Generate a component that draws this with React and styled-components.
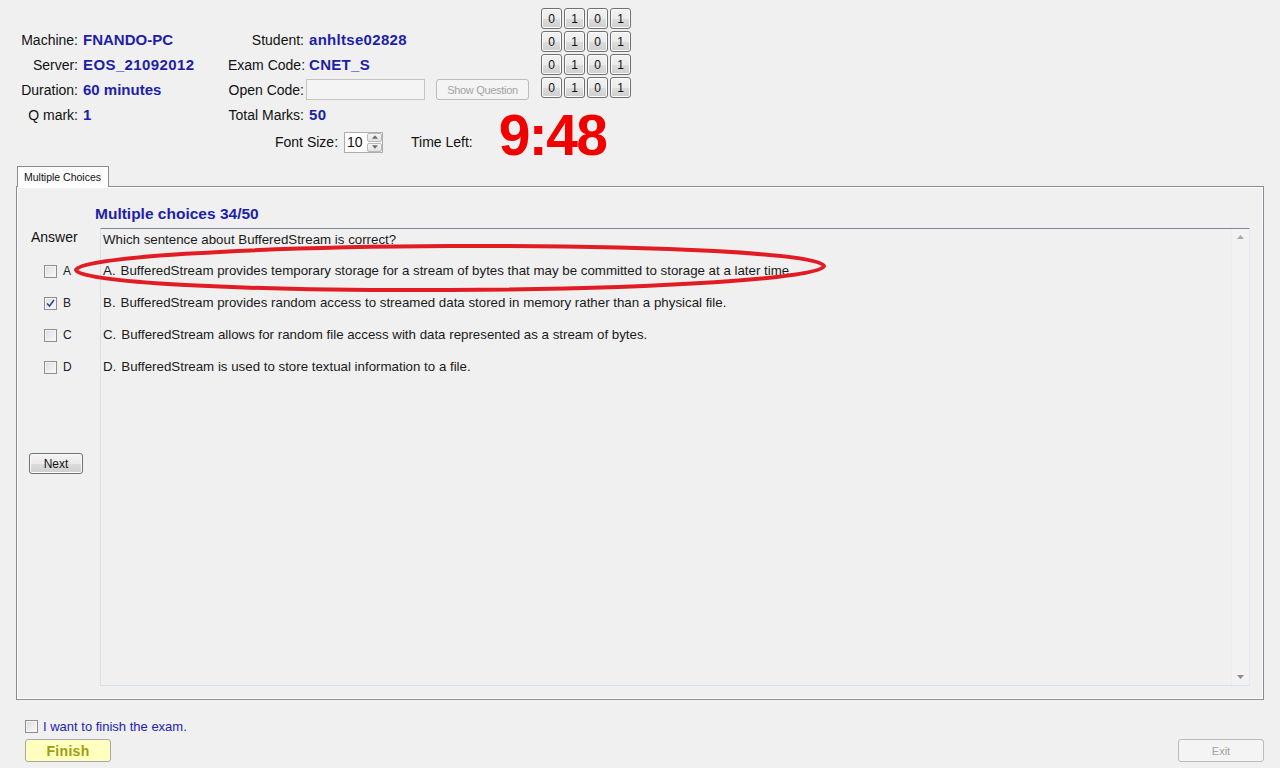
import styled, { createGlobalStyle } from "styled-components";

const GlobalStyle = createGlobalStyle`
  html, body {
    margin: 0;
    padding: 0;
    background: #f0f0f0;
  }
  body {
    font-family: "Liberation Sans", Arial, sans-serif;
    color: #111;
  }
`;

const info = [
  { label: "Machine:", value: "FNANDO-PC", label2: "Student:", value2: "anhltse02828" },
  { label: "Server:", value: "EOS_21092012", label2: "Exam Code:", value2: "CNET_S" },
  { label: "Duration:", value: "60 minutes", label2: "Open Code:", input: true },
  { label: "Q mark:", value: "1", label2: "Total Marks:", value2: "50" },
];

const options = [
  { key: "A", text: "BufferedStream provides temporary storage for a stream of bytes that may be committed to storage at a later time." },
  { key: "B", text: "BufferedStream provides random access to streamed data stored in memory rather than a physical file.", checked: true },
  { key: "C", text: "BufferedStream allows for random file access with data represented as a stream of bytes." },
  { key: "D", text: "BufferedStream is used to store textual information to a file." },
];

const bits = ["0", "1", "0", "1"];

const Page = styled.div`
  width: 1280px;
  height: 768px;
  overflow: hidden;
  display: flex;
  flex-direction: column;
`;

const Header = styled.div`
  display: grid;
  grid-template-columns: 529px auto;
  grid-template-rows: auto 28px;
  padding-top: 8px;
`;

const InfoGrid = styled.div`
  margin-top: 19px;
  margin-bottom: 1px;
  display: grid;
  grid-template-columns: 83px 145px 81px 1fr;
  grid-auto-rows: 25px;
  align-items: center;
`;

const Label = styled.div`
  text-align: right;
  padding-right: 5px;
  font-size: 14px;
  color: #111;
  white-space: nowrap;
`;

const Value = styled.div`
  font-size: 15px;
  font-weight: bold;
  color: #1e1eaa;
  white-space: nowrap;
  letter-spacing: ${(p) => p.$ls || 0}px;
`;

const CodeCell = styled.div`
  display: flex;
  align-items: center;
  gap: 11px;
`;

const CodeInput = styled.div`
  margin-left: -3px;
  width: 119px;
  height: 21px;
  box-sizing: border-box;
  border: 1px solid #c4c4c4;
  background: #f4f4f4;
`;

const WinButton = styled.button`
  box-sizing: border-box;
  width: ${(p) => p.$w}px;
  height: ${(p) => p.$h || 21}px;
  padding: 0;
  border: 1px solid ${(p) => (p.disabled ? "#b8bcbf" : "#707070")};
  border-radius: 3px;
  background: ${(p) =>
    p.disabled ? "#f4f4f4" : "linear-gradient(#f2f2f2 0%, #ebebeb 50%, #dddddd 51%, #cfcfcf 100%)"};
  color: ${(p) => (p.disabled ? "#a3a3a3" : "#111")};
  font-family: "Liberation Sans", Arial, sans-serif;
  font-size: ${(p) => p.$fs || 12}px;
  letter-spacing: ${(p) => p.$ls || 0}px;
  box-shadow: inset 0 0 0 1px ${(p) => (p.disabled ? "transparent" : "#fbfbfb")};
`;

const BitGrid = styled.div`
  margin-left: 12px;
  display: grid;
  grid-template-columns: repeat(4, 21px);
  grid-auto-rows: 21px;
  gap: 2px;
  align-self: start;
`;

const FontRow = styled.div`
  grid-column: 1 / span 2;
  display: flex;
  align-items: center;
  height: 28px;
  padding-left: 275px;
  font-size: 14px;
`;

const Spin = styled.div`
  margin-left: 6px;
  width: 39px;
  height: 21px;
  box-sizing: border-box;
  border: 1px solid #abadb3;
  background: #fff;
  display: flex;
  align-items: center;
  justify-content: space-between;
  padding-left: 2px;
  font-size: 14px;
`;

const SpinButtons = styled.div`
  width: 15px;
  height: 19px;
  display: flex;
  flex-direction: column;
  gap: 1px;
`;

const SpinArrow = styled.div`
  flex: 1;
  border: 1px solid #b9b9b9;
  border-radius: 2px;
  background: linear-gradient(#f6f6f6, #e1e1e1);
  display: flex;
  align-items: center;
  justify-content: center;
`;

const TimeLabel = styled.span`
  margin-left: 28px;
`;

const Timer = styled.div`
  margin-left: 26px;
  font-size: 57px;
  line-height: 57px;
  font-weight: bold;
  letter-spacing: -1.6px;
  color: #f20000;
  padding-bottom: 13px;
`;

const TabStrip = styled.div`
  margin: 10px 16px 0 17px;
  display: flex;
`;

const Tab = styled.div`
  height: 21px;
  box-sizing: border-box;
  padding: 0 7px 0 6px;
  border: 1px solid #898c95;
  border-bottom: none;
  background: #fcfcfc;
  font-size: 10.5px;
  line-height: 20px;
  color: #111;
  margin-bottom: -1px;
  position: relative;
  z-index: 1;
`;

const Panel = styled.div`
  position: relative;
  margin: 0 16px;
  height: 514px;
  box-sizing: border-box;
  border: 1px solid #898c95;
  box-shadow: inset 0 0 0 1px #ffffff;
  padding: 17px 13px 13px 0;
  display: flex;
  flex-direction: column;
`;

const Title = styled.div`
  height: 24px;
  padding-left: 78px;
  font-size: 15.5px;
  font-weight: bold;
  line-height: 19px;
  color: #1e1eaa;
`;

const PanelBody = styled.div`
  flex: 1;
  display: flex;
`;

const AnswerColumn = styled.div`
  width: 83px;
  display: flex;
  flex-direction: column;
`;

const AnswerLabel = styled.div`
  padding: 1px 0 0 14px;
  font-size: 14px;
  line-height: 17px;
`;

const ChoiceList = styled.div`
  margin-top: 9px;
`;

const ChoiceRow = styled.label`
  height: 32px;
  display: flex;
  align-items: center;
  gap: 6px;
  padding-left: 27px;
  font-size: 12px;
  color: #222;
`;

const Box = styled.span`
  width: 13px;
  height: 13px;
  box-sizing: border-box;
  border: 1px solid #8f8f8f;
  background: linear-gradient(135deg, #dcdcdc, #fbfbfb);
  box-shadow: inset 0 0 0 1px #f4f4f4;
  display: inline-flex;
  align-items: center;
  justify-content: center;
  flex-shrink: 0;
`;

const NextWrap = styled.div`
  margin-top: 70px;
  padding-left: 12px;
`;

const TextArea = styled.div`
  flex: 1;
  display: flex;
  border-top: 1px solid #7a8c9c;
  border-left: 1px solid #d6e0e9;
  border-right: 1px solid #e3e9ef;
  border-bottom: 1px solid #d6e0e9;
`;

const TextContent = styled.div`
  flex: 1;
  padding: 2px 0 0 2px;
  font-size: 13.3px;
  color: #1a1a1a;
`;

const Question = styled.div`
  line-height: 18px;
`;

const OptionLines = styled.div`
  margin-top: 6px;
`;

const OptionLine = styled.div`
  height: 32px;
  line-height: 32px;
  white-space: nowrap;
`;

const OptionKey = styled.span`
  margin-right: 5px;
`;

const Scrollbar = styled.div`
  width: 17px;
  display: flex;
  flex-direction: column;
  justify-content: space-between;
  align-items: center;
  padding: 6px 0 6px;
  background: #f2f2f2;
  border-left: 1px solid #ececec;
`;

const Ellipse = styled.svg`
  position: absolute;
  left: 55px;
  top: 55px;
  pointer-events: none;
`;

const Footer = styled.div`
  padding: 19px 16px 0 25px;
`;

const FinishRow = styled.label`
  display: flex;
  align-items: center;
  gap: 5px;
  height: 15px;
  font-size: 13px;
  color: #2222b4;
`;

const ButtonRow = styled.div`
  margin-top: 5px;
  display: flex;
  justify-content: space-between;
`;

const FinishButton = styled.button`
  width: 86px;
  height: 23px;
  box-sizing: border-box;
  border: 1px solid #a8a8a8;
  border-radius: 3px;
  background: #ffffc0;
  color: #9d9d10;
  font-family: "Liberation Sans", Arial, sans-serif;
  font-size: 14px;
  font-weight: bold;
  letter-spacing: 0.3px;
  padding: 0;
`;

const Check = ({ checked }) => (
  <Box>
    {checked && (
      <svg width="9" height="9" viewBox="0 0 9 9">
        <path d="M1 4.5 L3.5 7 L8 1" fill="none" stroke="#2a4a95" strokeWidth="1.6" />
      </svg>
    )}
  </Box>
);

const Arrow = ({ up, color = "#555", size = 7 }) => (
  <svg width={size} height={4} viewBox="0 0 7 4">
    <path d={up ? "M0 4 L3.5 0 L7 4 Z" : "M0 0 L3.5 4 L7 0 Z"} fill={color} />
  </svg>
);

const App = () => {
  return (
    <Page>
      <GlobalStyle />
      <Header>
        <InfoGrid>
          {info.map((row) => (
            <>
              <Label key={row.label}>{row.label}</Label>
              <Value $ls={row.label === "Server:" ? 0.4 : 0}>{row.value}</Value>
              <Label>{row.label2}</Label>
              {row.input ? (
                <CodeCell>
                  <CodeInput />
                  <WinButton disabled $w={93} $h={21} $fs={11} $ls={-0.3}>
                    Show Question
                  </WinButton>
                </CodeCell>
              ) : (
                <Value $ls={0.3}>{row.value2}</Value>
              )}
            </>
          ))}
        </InfoGrid>
        <BitGrid>
          {[0, 1, 2, 3].map((r) =>
            bits.map((b, i) => (
              <WinButton key={`${r}-${i}`} $w={21} $h={21} $fs={12}>
                {b}
              </WinButton>
            ))
          )}
        </BitGrid>
        <FontRow>
          <span>Font Size:</span>
          <Spin>
            <span>10</span>
            <SpinButtons>
              <SpinArrow>
                <Arrow up size={6} color="#6b6b6b" />
              </SpinArrow>
              <SpinArrow>
                <Arrow size={6} color="#6b6b6b" />
              </SpinArrow>
            </SpinButtons>
          </Spin>
          <TimeLabel>Time Left:</TimeLabel>
          <Timer>9:48</Timer>
        </FontRow>
      </Header>

      <TabStrip>
        <Tab>Multiple Choices</Tab>
      </TabStrip>
      <Panel>
        <Title>Multiple choices 34/50</Title>
        <PanelBody>
          <AnswerColumn>
            <AnswerLabel>Answer</AnswerLabel>
            <ChoiceList>
              {options.map((o) => (
                <ChoiceRow key={o.key}>
                  <Check checked={o.checked} />
                  {o.key}
                </ChoiceRow>
              ))}
            </ChoiceList>
            <NextWrap>
              <WinButton $w={54} $h={21} $fs={12}>
                Next
              </WinButton>
            </NextWrap>
          </AnswerColumn>
          <TextArea>
            <TextContent>
              <Question>Which sentence about BufferedStream is correct?</Question>
              <OptionLines>
                {options.map((o) => (
                  <OptionLine key={o.key}>
                    <OptionKey>{o.key}.</OptionKey>
                    {o.text}
                  </OptionLine>
                ))}
              </OptionLines>
            </TextContent>
            <Scrollbar>
              <Arrow up color="#a8a8a8" />
              <Arrow color="#8a8a8a" />
            </Scrollbar>
          </TextArea>
        </PanelBody>
        <Ellipse width="760" height="52" viewBox="0 0 760 52">
          <ellipse
            cx="378"
            cy="26"
            rx="374"
            ry="22"
            fill="none"
            stroke="#e21c24"
            strokeWidth="4"
            transform="rotate(-0.3 378 26)"
          />
        </Ellipse>
      </Panel>

      <Footer>
        <FinishRow>
          <Check />
          I want to finish the exam.
        </FinishRow>
        <ButtonRow>
          <FinishButton>Finish</FinishButton>
          <WinButton disabled $w={86} $h={23} $fs={11}>
            Exit
          </WinButton>
        </ButtonRow>
      </Footer>
    </Page>
  );
};

export default App;
